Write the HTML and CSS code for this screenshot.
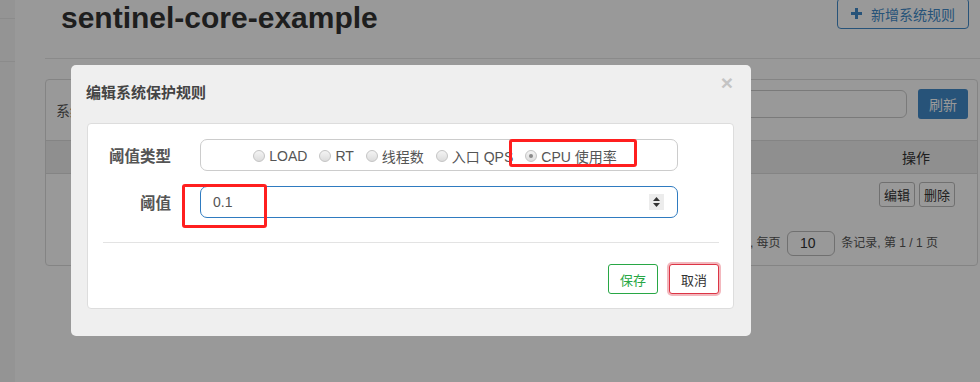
FILE: index.html
```html
<!DOCTYPE html>
<html lang="zh-CN">
<head>
    <meta charset="UTF-8">
    <title>sentinel-core-example</title>
    <link rel="stylesheet" href="styles.css">
</head>
<body>
    <div class="layout">
        <div class="sidebar">
            <div class="side-item"></div>
            <div class="side-item"></div>
        </div>
        <div class="main">
            <div class="page-header">
                <h1>sentinel-core-example</h1>
                <button class="btn-add">
                    <svg class="plus" width="11" height="11" viewBox="0 0 11 11">
                        <path d="M4 0 H7 V4 H11 V7 H7 V11 H4 V7 H0 V4 H4 Z" fill="currentColor"/>
                    </svg>新增系统规则</button>
            </div>
            <div class="panel">
                <div class="panel-heading">
                    <span class="panel-title">系统规则</span>
                    <div class="search">
                        <input class="search-input" placeholder="关键字">
                        <button class="btn-refresh">刷新</button>
                    </div>
                </div>
                <div class="table-head">
                    <span class="col-op">操作</span>
                </div>
                <div class="table-row">
                    <button class="btn-sm">编辑</button>
                    <button class="btn-sm">删除</button>
                </div>
                <div class="pager">
                    共 1 条记录, 每页 <span class="pager-input">10</span> 条记录, 第 1 / 1 页
                </div>
            </div>
        </div>
    </div>

    <div class="backdrop"></div>

    <div class="modal">
        <div class="modal-header">
            <h3>编辑系统保护规则</h3>
            <span class="close">&times;</span>
        </div>
        <div class="modal-body">
            <div class="form-row">
                <label class="form-label">阈值类型</label>
                <div class="radio-box">
                    <span class="radio"></span><span class="radio-text">LOAD</span>
                    <span class="radio"></span><span class="radio-text">RT</span>
                    <span class="radio"></span><span class="radio-text">线程数</span>
                    <span class="radio"></span><span class="radio-text">入口 QPS</span>
                    <span class="radio checked"></span><span class="radio-text">CPU 使用率</span>
                </div>
            </div>
            <div class="form-row">
                <label class="form-label">阈值</label>
                <div class="number-input">
                    <span>0.1</span>
                    <svg class="spinner" width="15" height="16" viewBox="0 0 15 16">
                        <rect width="15" height="16" fill="#ececec"/>
                        <path d="M4 7 L7.5 3 L11 7 Z" fill="#333"/>
                        <path d="M4 9 L7.5 13 L11 9 Z" fill="#333"/>
                    </svg>
                </div>
            </div>
            <div class="divider"></div>
            <div class="actions">
                <button class="btn-save">保存</button>
                <button class="btn-cancel">取消</button>
            </div>
        </div>
    </div>

    <div class="mark mark-cpu"></div>
    <div class="mark mark-value"></div>
</body>
</html>
```

FILE: styles.css
```css
* {
    margin: 0;
    padding: 0;
    box-sizing: border-box;
}
body {
    font-family: "Liberation Sans", "Noto Sans CJK SC", sans-serif;
    background: #fff;
    color: #333;
    font-size: 14px;
    overflow: hidden;
}
button {
    font-family: inherit;
}
.layout {
    display: flex;
    min-height: 382px;
}
.sidebar {
    width: 15px;
    background: #f7f7f7;
}
.side-item {
    height: 43px;
    border-bottom: 1px solid #e8e8e8;
}
.side-item:first-child {
    height: 19px;
}
.main {
    flex: 1;
    padding-left: 30px;
}
.page-header {
    height: 59px;
    border-bottom: 1px solid #e6e6e6;
    display: flex;
    justify-content: space-between;
    align-items: flex-start;
}
.page-header h1 {
    font-size: 30px;
    font-weight: bold;
    color: #333;
    margin-left: 16px;
    margin-top: 1px;
}
.btn-add {
    height: 31px;
    margin-top: -2px;
    margin-right: 11px;
    padding: 0 13px 0 12px;
    background: #fff;
    border: 1px solid #428bca;
    border-radius: 4px;
    color: #428bca;
    font-size: 14px;
    display: flex;
    align-items: center;
}
.plus {
    margin-right: 9px;
    margin-left: 1px;
}
.panel {
    margin-top: 20px;
    margin-right: 2px;
    height: 187px;
    border: 1px solid #ddd;
    border-radius: 4px;
}
.panel-heading {
    height: 60px;
    display: flex;
    justify-content: space-between;
    align-items: flex-start;
    padding: 9px 9px 0 10px;
}
.panel-title {
    margin-top: 11px;
    font-size: 14px;
    color: #555;
}
.search {
    display: flex;
    gap: 11px;
}
.search-input {
    width: 230px;
    height: 28px;
    margin-top: 1px;
    border: 1px solid #ccc;
    border-radius: 6px;
    padding: 0 12px;
    font-family: inherit;
    font-size: 14px;
}
.search-input::placeholder {
    color: #999;
}
.btn-refresh {
    width: 50px;
    height: 30px;
    border: none;
    border-radius: 3px;
    background: #428bca;
    color: #fff;
    font-size: 14px;
}
.table-head {
    height: 34px;
    background: #eee;
    border-top: 1px solid #ddd;
    border-bottom: 1px solid #ddd;
    display: flex;
    justify-content: flex-end;
    align-items: center;
    padding-right: 47px;
}
.col-op {
    font-size: 14px;
    color: #333;
}
.table-row {
    height: 55px;
    display: flex;
    justify-content: flex-end;
    align-items: flex-start;
    gap: 4px;
    padding: 8px 22px 0 0;
}
.btn-sm {
    height: 25px;
    padding: 0 4px;
    background: #fff;
    border: 1px solid #bbb;
    border-radius: 3px;
    font-size: 13px;
    color: #333;
}
.pager {
    text-align: right;
    padding-right: 39px;
    font-size: 12px;
    color: #555;
    margin-top: 2px;
}
.pager-input {
    display: inline-block;
    width: 48px;
    height: 25px;
    line-height: 23px;
    border: 1px solid #bbb;
    border-radius: 6px;
    padding-left: 12px;
    margin: 0 3px;
    font-size: 14px;
    color: #333;
    text-align: left;
    vertical-align: middle;
}
.backdrop {
    position: fixed;
    inset: 0;
    background: rgba(0, 0, 0, 0.4);
}
.modal {
    position: absolute;
    left: 71px;
    top: 65px;
    width: 680px;
    height: 271px;
    background: #efefef;
    border-radius: 5px;
}
.modal-header {
    height: 58px;
    padding: 16px 15px 0 15px;
    display: flex;
    justify-content: space-between;
    align-items: flex-start;
}
.modal-header h3 {
    font-size: 15px;
    font-weight: bold;
    color: #444;
    font-family: "Noto Sans CJK SC", sans-serif;
}
.close {
    font-size: 21px;
    font-weight: bold;
    line-height: 1;
    color: #c4c4c4;
    margin-top: -9px;
    margin-right: 3px;
}
.modal-body {
    margin: 0 17px 0 16px;
    height: 186px;
    background: #fff;
    border: 1px solid #ddd;
    border-radius: 4px;
    padding: 15px 14px 0 15px;
}
.form-row {
    display: flex;
    align-items: center;
    margin-bottom: 15px;
}
.form-label {
    width: 68px;
    margin-right: 29px;
    text-align: right;
    font-size: 15.5px;
    font-weight: bold;
    color: #555;
    font-family: "Noto Sans CJK SC", sans-serif;
}
.radio-box {
    width: 478px;
    height: 32px;
    border: 1px solid #ccc;
    border-radius: 7px;
    display: flex;
    justify-content: center;
    align-items: center;
    padding-right: 8px;
    padding-top: 2px;
    color: #555;
    font-size: 14px;
}
.radio {
    width: 12px;
    height: 12px;
    border-radius: 50%;
    border: 1px solid #c4c4c4;
    background: linear-gradient(#f4f4f4, #dcdcdc);
    margin-right: 4px;
    margin-top: -1px;
    position: relative;
}
.radio.checked::after {
    content: '';
    position: absolute;
    left: 3px;
    top: 3px;
    width: 4px;
    height: 4px;
    border-radius: 50%;
    background: #8a8a8a;
}
.radio-text {
    margin-right: 12px;
}
.radio-text:last-child {
    margin-right: 0;
}
.number-input {
    width: 478px;
    height: 32px;
    border: 1px solid #2f7bc0;
    border-radius: 7px;
    display: flex;
    justify-content: space-between;
    align-items: center;
    padding: 0 13px 0 12px;
    font-size: 14px;
    color: #555;
}
.divider {
    height: 1px;
    background: #e3e3e3;
    margin-top: 24px;
}
.actions {
    display: flex;
    justify-content: flex-end;
    gap: 11px;
    margin-top: 21px;
}
.btn-save {
    width: 50px;
    height: 30px;
    background: #fff;
    border: 1px solid #28a745;
    border-radius: 3px;
    color: #28a745;
    font-size: 13px;
}
.btn-cancel {
    width: 50px;
    height: 30px;
    background: #fff;
    border: 1px solid #dc3545;
    border-radius: 3px;
    color: #333;
    font-size: 13px;
    box-shadow: 0 0 0 2px rgba(220, 53, 69, 0.35);
}
.mark {
    position: absolute;
    border: 3px solid #ff1f1f;
    border-radius: 3px;
}
.mark-cpu {
    left: 509px;
    top: 139px;
    width: 128px;
    height: 28px;
}
.mark-value {
    left: 182px;
    top: 184px;
    width: 85px;
    height: 44px;
}
```
